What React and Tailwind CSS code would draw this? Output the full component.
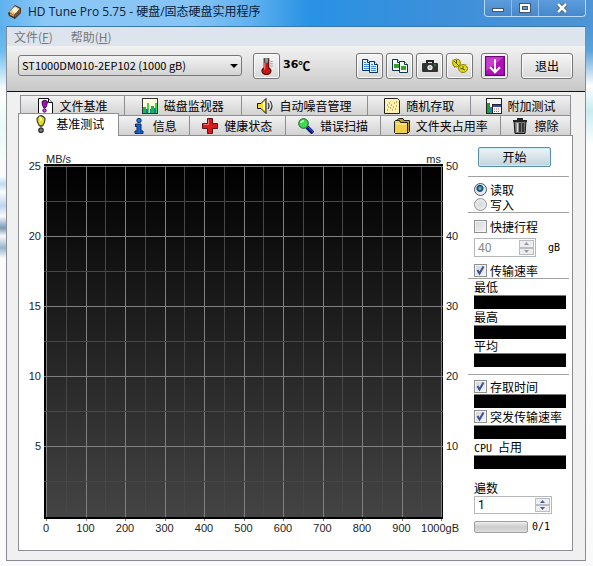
import React from "react";

const CJK = "font-['Noto_Sans_CJK_SC','Liberation_Sans',sans-serif]";
const MONO = "font-['DejaVu_Sans_Mono','Noto_Sans_CJK_SC',monospace]";
const UI = "font-['Open_Sans','Noto_Sans_CJK_SC',sans-serif]";
const FIELD = "font-['Roboto','Noto_Sans_CJK_SC',sans-serif]";
const BOLD = "font-['DejaVu_Sans','Noto_Sans_CJK_SC',sans-serif]";

function Icon({ children, className = "size-4" }) {
  return (
    <svg viewBox="0 0 16 16" className={`${className} shrink-0`} aria-hidden="true">
      {children}
    </svg>
  );
}

const AppLogo = () => (
  <Icon>
    <path d="M1 9 8 1l6 3v5l-6 6-6-3z" fill="#3a3028" />
    <path d="M2 8 8 2l5 3-6 6z" fill="#e8c48c" />
    <circle cx="8" cy="6" r="2.6" fill="#fff3d8" />
    <path d="m7 11 6-6 1 3-6 6z" fill="#6e5234" />
    <path d="m3 10 4 2" stroke="#d89848" strokeWidth="1.5" />
  </Icon>
);

const FileBenchIcon = () => (
  <Icon>
    <path d="M1.5.5h10l4 4v11h-14z" fill="#fff" stroke="#111" />
    <path d="M11.5.5v4h4" fill="#ddd" stroke="#111" />
    <path d="M5 3.5Q8 1 10.500 3.500L9.500 8.500 8 10H7L5.500 7.500z" fill="#a010b0" stroke="#400050" />
    <circle cx="7.500" cy="12.500" r="1.700" fill="#d050e0" stroke="#400050" />
  </Icon>
);

const MonitorIcon = () => (
  <Icon>
    <rect x=".5" y=".5" width="15" height="15" fill="#fffde0" stroke="#333" />
    <path d="M1 9h3v6H1zM9 8h3v7H9z" fill="#18b838" />
    <path d="M5 5h2v10H5zM13 5h2v10h-2z" fill="#40d840" />
    <path d="M4 11h2v4H4zM8 11h1v4H8zM12 10h2v5h-2z" fill="#1878b0" />
  </Icon>
);

const SpeakerIcon = () => (
  <Icon>
    <path d="M.5 5.500h3.500l5-5v15l-5-5H.5z" fill="#f4dc28" stroke="#111" />
    <path d="M7 4v8" stroke="#fff8b0" strokeWidth="2" />
    <path d="M11 5q2 3 0 6M13 3q4 5 0 10" fill="none" stroke="#333" strokeWidth="1.200" />
  </Icon>
);

const RandomIcon = () => (
  <Icon>
    <path d="M.5.5h13l2 2v13H.5z" fill="#fff2b0" stroke="#222" />
    <path
      d="M3 12h1M4 9h1M6 10h1M7 7h1M9 9h1M10 5h1M12 4h1M12 8h1M5 5h1M8 12h1M11 11h1M3 7h1"
      stroke="#a06820"
    />
  </Icon>
);

const ExtraIcon = () => (
  <Icon>
    <rect x=".5" y=".5" width="15" height="15" fill="#f4f4f4" stroke="#222" />
    <path d="M1 5h3v10H1z" fill="#18a030" />
    <path d="M4 9h3v6H4z" fill="#2080c0" />
    <rect x="6.500" y="6.500" width="9" height="9" fill="#fff" stroke="#222" />
    <path d="M7 8h8" stroke="#3048c0" strokeWidth="2" />
    <path d="M8 11h6M8 13.500h6" stroke="#d04890" strokeDasharray="1 1" />
  </Icon>
);

const BulbIcon = () => (
  <Icon className="h-[18px] w-[18px]">
    <path d="M4.500 3Q8-2 11.500 3 12 5 9.500 9.500h-3Q4 5 4.500 3z" fill="#e4dc20" stroke="#333" />
    <path d="M6.500 2.500Q7.500 1 8 5" stroke="#fffcb0" strokeWidth="1.500" fill="none" />
    <path d="M7 10h2v1H7z" fill="#333" />
    <circle cx="8" cy="13.500" r="2" fill="#777" stroke="#222" />
  </Icon>
);

const InfoIcon = () => (
  <Icon>
    <circle cx="8" cy="2.500" r="2.200" fill="#1878e8" stroke="#082858" />
    <path d="M4.500 6H10v7h2v2.500H4V13h2V8.500H4.500z" fill="#1060d8" stroke="#082858" />
  </Icon>
);

const HealthIcon = () => (
  <Icon>
    <path d="M5.500.5h5v5h5v5h-5v5h-5v-5h-5v-5h5z" fill="#d81c1c" stroke="#601010" />
    <path d="M6.500 1.500v5h-5" stroke="#ff7070" fill="none" />
  </Icon>
);

const ScanIcon = () => (
  <Icon>
    <path d="m9 9 6 6" stroke="#101060" strokeWidth="4" />
    <path d="m10 9 5 5" stroke="#3048d0" strokeWidth="1.500" />
    <circle cx="5.500" cy="5.500" r="4.800" fill="#40d850" stroke="#106020" />
    <path d="M3 5q0-2 3-2" stroke="#d0ffd0" fill="none" strokeWidth="1.500" />
  </Icon>
);

const FolderIcon = () => (
  <Icon>
    <path d="M3.500 3V1.500L5 .5h4l1 2h5.500v11l-2 2" fill="#c89818" stroke="#222" />
    <path d="M.5 5V3.500l1-1h4l1 2h7v11h-12l-1-1z" fill="#f0d048" stroke="#222" />
    <path d="M2 6h10" stroke="#fff4a8" />
  </Icon>
);

const TrashIcon = () => (
  <Icon>
    <path d="M2 3h12l-1 12.500H3z" fill="#777" stroke="#111" />
    <path d="M5.500 5v9" stroke="#ddd" strokeWidth="1.500" />
    <path d="M8 5v9M11 5v9" stroke="#222" strokeWidth="1.500" />
    <path d="M1 3h14M5 1h6" stroke="#222" strokeWidth="2" />
  </Icon>
);

const ThermometerIcon = () => (
  <Icon className="h-[18px] w-[18px]">
    <path d="M5.500 1.500h4v8q3 2 1.500 4.500-1.500 1.500-3.500 1.500T4 14Q2.500 11.500 5.500 9.500z" fill="#c81818" stroke="#500" />
    <path d="M6 1h3v4H6z" fill="#48b0b0" />
    <path d="M6 5v6" stroke="#ff8080" />
    <path d="M11 4h2M11 6h2M11 8h2" stroke="#999" />
  </Icon>
);

function Page({ x, y, image }) {
  return (
    <g transform={`translate(${x} ${y})`}>
      <path d="M.5.5h5l3 3v8h-8z" fill={image ? "#f4fcf0" : "#d8f0ff"} stroke="#103050" />
      <path d="M5.500.5v3h3" fill="#fff" stroke="#103050" />
      {image ? (
        <path d="M2 5h5v4H2z" fill="#38a028" />
      ) : (
        <path d="M2 3.500h2M2 5.500h5M2 7.500h5M2 9.500h5" stroke="#3c88dc" />
      )}
    </g>
  );
}

const CopyIcon = () => (
  <Icon>
    <Page x={0} y={1} />
    <Page x={7} y={3} />
  </Icon>
);
const CopyImageIcon = () => (
  <Icon>
    <Page x={0} y={1} image />
    <Page x={7} y={3} image />
  </Icon>
);
const CameraIcon = () => (
  <Icon>
    <path d="M5 5V3h6v2" fill="none" stroke="#222" strokeWidth="2" />
    <rect x="0" y="5" width="16" height="9" rx="1" fill="#303430" />
    <circle cx="8" cy="9.500" r="2.600" fill="#f4f4f4" />
    <circle cx="8" cy="9.500" r="1.400" fill="#bbb" />
    <path d="M12 7h2" stroke="#30b050" />
  </Icon>
);
const OptionsIcon = () => (
  <Icon>
    <g fill="#e0d818" stroke="#8c8208">
      <ellipse cx="4.500" cy="5" rx="4" ry="4" />
      <ellipse cx="11" cy="10.500" rx="4.500" ry="4" />
      <path d="m2 3 5 5M4.500 2v4M8 10l5 2M11 8v3" fill="none" stroke="#5c5804" />
      <path d="m3 9-1 1M0 2l2 1M8 14l1-1M14 6l-1 2" stroke="#b0a810" />
    </g>
  </Icon>
);
const SaveIcon = () => (
  <Icon className="size-5">
    <rect x=".5" y=".5" width="15" height="15" fill="#b010b8" stroke="#680870" />
    <path d="M1 1h14L1 12z" fill="#c83cd0" />
    <path d="M8 2.500V13M4 9l4 4 4-4" stroke="#fff" strokeWidth="1.600" fill="none" />
  </Icon>
);

const TOP_TABS = [
  { label: "文件基准", icon: FileBenchIcon, size: "flex-[104]" },
  { label: "磁盘监视器", icon: MonitorIcon, size: "flex-[117]" },
  { label: "自动噪音管理", icon: SpeakerIcon, size: "flex-[127]" },
  { label: "随机存取", icon: RandomIcon, size: "flex-[103]" },
  { label: "附加测试", icon: ExtraIcon, size: "flex-[100]" },
];

const BOTTOM_TABS = [
  { label: "基准测试", icon: BulbIcon, size: "flex-[100]", active: true },
  { label: "信息", icon: InfoIcon, size: "flex-[71]" },
  { label: "健康状态", icon: HealthIcon, size: "flex-[96]" },
  { label: "错误扫描", icon: ScanIcon, size: "flex-[96]" },
  { label: "文件夹占用率", icon: FolderIcon, size: "flex-[120]" },
  { label: "擦除", icon: TrashIcon, size: "flex-[70]" },
];

function Tab({ label, icon: Glyph, size, active }) {
  const look = active
    ? "relative -mt-0.5 -mb-px h-[23px] border-t border-l bg-white pb-0.5"
    : "h-5 border-t bg-linear-to-b from-[#f2f2f2] to-[#d2d2d2]";
  return (
    <button
      role="tab"
      aria-selected={!!active}
      className={`flex min-w-0 items-center justify-center gap-1.5 border-r border-[#8c8e94] whitespace-nowrap ${size} ${look}`}
    >
      <Glyph />
      <span>{label}</span>
    </button>
  );
}

function ToolButton({ label, children, className = "w-[27px]" }) {
  return (
    <button
      aria-label={label}
      className={`flex h-[26px] shrink-0 items-center justify-center rounded-[3px] border border-[#777] bg-linear-to-b from-[#f6f6f6] to-[#d8d8d8] shadow-[inset_0_0_0_1px_#fbfbfb] ${className}`}
    >
      {children}
    </button>
  );
}

function Chart() {
  const left = 27;
  const top = 30;
  const stepX = 39.5;
  const stepY = 70;
  const right = left + stepX * 10;
  const bottom = 381;
  const cols = Array.from({ length: 21 }, (_, i) => i);
  const rows = Array.from({ length: 10 }, (_, i) => i);
  return (
    <svg
      viewBox="0 0 449 414"
      role="img"
      aria-label="MB/s"
      className="block w-full font-['Liberation_Sans',sans-serif] text-[11px]"
    >
      <defs>
        <linearGradient id="plot" x1="0" y1="0" x2="0" y2="1">
          <stop offset="0" stopColor="#000" />
          <stop offset="1" stopColor="#444" />
        </linearGradient>
      </defs>
      <rect x={left - 2} y={top - 2} width={right - left + 4} height={bottom - top + 4} fill="#000" />
      <rect x={left} y={top} width={right - left} height={bottom - top} fill="url(#plot)" />
      <g shapeRendering="crispEdges">
        {cols.map((i) => (
          <path
            key={`c${i}`}
            d={`M${Math.round(left + (i * stepX) / 2) + 0.5} ${top}V${i % 2 ? bottom + 2 : bottom + 4}`}
            stroke={i % 2 ? "#474747" : "#808080"}
          />
        ))}
        {rows.map((i) => (
          <path
            key={`r${i}`}
            d={`M${left - 2} ${top + (i * stepY) / 2 + 0.5}H${right + 2}`}
            stroke={i % 2 ? "#474747" : "#808080"}
          />
        ))}
      </g>
      <path d={`M${left - 2} ${bottom + 1}H${right + 2}`} stroke="#000" strokeWidth="2" />
      <g fill="#222">
        <text x={left} y="27">MB/s</text>
        <text x={right} y="27" textAnchor="end">ms</text>
        {[25, 20, 15, 10, 5].map((v, i) => (
          <text key={v} x={left - 5} y={top + 4 + i * stepY} textAnchor="end">{v}</text>
        ))}
        {[50, 40, 30, 20, 10].map((v, i) => (
          <text key={v} x={right + 5} y={top + 4 + i * stepY}>{v}</text>
        ))}
        {[0, 100, 200, 300, 400, 500, 600, 700, 800, 900].map((v, i) => (
          <text key={v} x={left + i * stepX} y="396" textAnchor="middle">{v}</text>
        ))}
        <text x={right + 18} y="396" textAnchor="end">1000gB</text>
      </g>
    </svg>
  );
}

function Check({ label, checked, className = "h-[15px]" }) {
  return (
    <label className={`flex items-center gap-[3px] leading-[15px] ${className}`}>
      <span className="grid">
        <input
          type="checkbox"
          defaultChecked={checked}
          className="peer col-start-1 row-start-1 size-[13px] appearance-none border border-[#8e8f8f] bg-linear-to-br from-[#cfd3d8] to-[#f6f6f6] shadow-[inset_0_0_0_1px_#f4f4f4]"
        />
        <svg viewBox="0 0 13 13" className="pointer-events-none invisible col-start-1 row-start-1 size-[13px] peer-checked:visible">
          <path d="m3.500 6 2 3.500 4-7" fill="none" stroke="#3d4f94" strokeWidth="2" />
        </svg>
      </span>
      {label}
    </label>
  );
}

function Radio({ label, checked }) {
  return (
    <label className="flex h-[15px] items-center gap-[3px] leading-[15px]">
      <input
        type="radio"
        name="mode"
        defaultChecked={checked}
        className="size-[13px] appearance-none rounded-full border border-[#8e8f8f] bg-radial from-[#d4d8dc] to-[#f4f4f4] checked:border-[#456] checked:bg-[radial-gradient(circle_at_45%_40%,#9fe0f4_0,#1c6f9c_2px,#123f60_3px,#e4ecf0_4px)]"
      />
      {label}
    </label>
  );
}

function Spinner({ label, value, disabled, className }) {
  return (
    <span className={`flex border border-[#b4b8bc] bg-white p-px ${className}`}>
      <input
        aria-label={label}
        defaultValue={value}
        disabled={disabled}
        className={`w-0 min-w-0 flex-1 pl-0.5 text-[12px] ${FIELD} ${disabled ? "text-[#888]" : "text-black"}`}
      />
      <span className="flex w-[15px] flex-col">
        {["增加", "减少"].map((name, i) => (
          <button
            key={name}
            aria-label={name}
            disabled={disabled}
            className={`flex flex-1 items-center justify-center border border-[#b8bcc4] bg-[#eee] ${disabled ? "text-[#999]" : "text-[#4a5c8c]"}`}
          >
            <svg viewBox="0 0 5 3" className="h-[3px] w-[5px]">
              <path d={i ? "M0 0h5L2.500 3z" : "M0 3h5L2.500 0z"} fill="currentColor" />
            </svg>
          </button>
        ))}
      </span>
    </span>
  );
}

const Rule = ({ className = "" }) => <hr className={`-ml-1.5 border-[#a0a0a0] ${className}`} />;
const Readout = () => <output className="mr-[3px] block h-3.5 border-t border-[#777] bg-black" />;

function SidePanel() {
  return (
    <aside className="flex w-[104px] shrink-0 flex-col pt-[11px] pr-[3px] pl-1.5">
      <button className="mr-[18px] ml-1 h-5 rounded-[2px] border border-[#5590a8] bg-linear-to-b from-[#eef4f6] to-[#c0d4dc] leading-4 shadow-[inset_0_0_0_1px_#c8ecf6]">
        开始
      </button>
      <Rule className="mt-[9px] mb-[5px]" />
      <Radio label="读取" checked />
      <Radio label="写入" />
      <Rule />
      <Check label="快捷行程" className="mt-[5px] h-4" />
      <div className="mt-1 flex items-center">
        <Spinner label="快捷行程 gB" value="40" disabled className="h-[19px] w-[62px]" />
        <span className={`ml-3 text-[10px] ${MONO}`}>gB</span>
      </div>
      <Check label="传输速率" checked className="mt-1.5 h-[15px]" />
      <Rule />
      <span className="h-4 leading-4">最低</span>
      <Readout />
      <span className="h-4 leading-4">最高</span>
      <Readout />
      <span className="h-3.5 leading-3.5">平均</span>
      <Readout />
      <Rule className="mt-[7px] mb-1" />
      <Check label="存取时间" checked />
      <Readout />
      <Check label="突发传输速率" checked className="h-[17px] whitespace-nowrap" />
      <Readout />
      <span className="h-4 leading-4">
        <span className={`text-[10px] ${MONO}`}>CPU </span>占用
      </span>
      <Readout />
      <span className="mt-[11px] h-4 leading-4">遍数</span>
      <Spinner label="遍数" value="1" className="h-[18px] w-[78px]" />
      <div className="mt-[7px] flex items-center gap-1">
        <div
          role="progressbar"
          aria-valuenow={0}
          aria-valuemax={1}
          aria-label="遍数"
          className="h-3 w-[54px] rounded-[2px] border border-[#a0a0a0] bg-linear-to-b from-[#eee] via-[#ccc] to-[#ddd]"
        />
        <span className={`text-[10px] leading-3 ${MONO}`}>0/1</span>
      </div>
    </aside>
  );
}

function TitleBar() {
  return (
    <header className="flex h-[26px] items-start justify-between bg-[linear-gradient(to_right,#5fb2f0_0,#8cc8f6_8%,#86c4f5_32%,#62b2f0_42%,#2992e4_52%,#3d8fda_75%,#4f94d4)] pl-[7px]">
      <h1 className={`flex h-6 items-center gap-[5px] text-[12px] text-[#0c2038] ${UI}`}>
        <AppLogo />
        HD Tune Pro 5.75 - 硬盘/固态硬盘实用程序
      </h1>
      <div className="mr-[7px] flex h-[17px] rounded-b-[4px] border border-t-0 border-[#b4dcf6] bg-linear-to-b from-[#5c9cdc] to-[#4688cc]">
        <button aria-label="最小化" className="flex w-[27px] items-center justify-center border-r border-[#8cbce8]">
          <span className="mt-1 h-1 w-3 border border-[#456] bg-white" />
        </button>
        <button aria-label="最大化" className="flex w-[27px] items-center justify-center border-r border-[#8cbce8]">
          <svg viewBox="0 0 12 10" className="h-2.5 w-3">
            <rect x=".5" y=".5" width="11" height="9" fill="#fff" stroke="#456" />
            <rect x="3.500" y="3.500" width="5" height="3" fill="#5c9cdc" stroke="#456" />
          </svg>
        </button>
        <button aria-label="关闭" className="flex w-[46px] items-center justify-center">
          <svg viewBox="0 0 12 10" className="h-2.5 w-3">
            <path d="m2 1 8 8M10 1 2 9" stroke="#456" strokeWidth="4" />
            <path d="m2 1 8 8M10 1 2 9" stroke="#fff" strokeWidth="2.500" />
          </svg>
        </button>
      </div>
    </header>
  );
}

export default function App() {
  return (
    <div className={`flex min-h-screen flex-col bg-[#fafafa] text-[12px] text-black ${CJK}`}>
      <TitleBar />
      <div className="flex">
        <div className="w-1.5 shrink-0 bg-[linear-gradient(to_bottom,#5cb0ee_0,#6cbcf0_25px,#fff_65px,#e8fafa_100px,#fafcfc_140px,#fafcfc_150px,#c4dcee_158px,#fafcfc_166px,#c0d4ec_180px,#fafcfc_190px,#7c98b4_202px,#fafcfc_210px,#98b4cc_222px,#fafcfc_232px)]" />
        <div className="min-w-0 flex-1 border border-[#888c90] border-t-[#3878b0] bg-[#f0f0f0]">
          <nav className="flex h-[19px] items-center gap-[18px] bg-[#dde4ed] pl-[7px] text-[#777]">
            <button>文件(<u>F</u>)</button>
            <button>帮助(<u>H</u>)</button>
          </nav>
          <div className="flex h-[46px] items-center border-b border-[#111] bg-linear-to-b from-[#f2f2f2] to-[#c8c8c8] pb-1.5 pr-3 pl-[11px]">
            <span className="grid w-[224px] items-center">
              <select
                aria-label="硬盘"
                className={`col-start-1 row-start-1 h-[21px] w-full appearance-none rounded-[3px] border border-[#777] bg-linear-to-b from-[#f2f2f2] to-[#d4d4d4] pl-[3px] text-[11px] ${CJK}`}
              >
                <option>ST1000DM010-2EP102 (1000 gB)</option>
              </select>
              <svg viewBox="0 0 8 4" className="pointer-events-none col-start-1 row-start-1 mr-1 h-1 w-2 justify-self-end">
                <path d="M0 0h8L4 4z" />
              </svg>
            </span>
            <div className="ml-[11px]">
              <ToolButton label="温度"><ThermometerIcon /></ToolButton>
            </div>
            <span className="ml-[3px] flex items-center font-bold">
              <span className={`text-[11px] ${BOLD}`}>36</span>
              <span>℃</span>
            </span>
            <div className="ml-auto flex gap-[3px]">
              <ToolButton label="复制文本"><CopyIcon /></ToolButton>
              <ToolButton label="复制截图"><CopyImageIcon /></ToolButton>
              <ToolButton label="截图"><CameraIcon /></ToolButton>
              <ToolButton label="选项"><OptionsIcon /></ToolButton>
            </div>
            <div className="ml-2">
              <ToolButton label="保存"><SaveIcon /></ToolButton>
            </div>
            <div className="ml-[13px]">
              <ToolButton label="退出" className="w-[52px]">退出</ToolButton>
            </div>
          </div>
          <main className="pt-[3px] pr-3 pb-[9px] pl-[11px]">
            <div role="tablist">
              <div className="mr-0.5 ml-0.5 flex border-l border-[#8c8e94]">
                {TOP_TABS.map((tab) => <Tab key={tab.label} {...tab} />)}
              </div>
              <div className="mr-0.5 flex">
                {BOTTOM_TABS.map((tab) => <Tab key={tab.label} {...tab} />)}
              </div>
            </div>
            <section role="tabpanel" className="flex border border-[#8c8e94] bg-white">
              <div className="min-w-0 flex-1"><Chart /></div>
              <SidePanel />
            </section>
          </main>
        </div>
        <div className="w-[7px] shrink-0 bg-[linear-gradient(to_bottom,#4f94d4_0,#5ca4dc_25px,#fff_60px,#c8ecf0_85px,#fff_120px,#f8fafa_100%)]" />
      </div>
    </div>
  );
}
